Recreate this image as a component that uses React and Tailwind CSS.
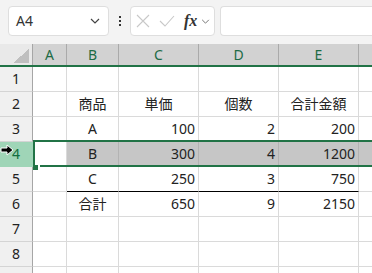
// Excel-like sheet: name box + formula bar on top, grid with row 4 selected.
const cols = [
  { key: 'A', w: 'w-[34px]' },
  { key: 'B', w: 'w-[52px]' },
  { key: 'C', w: 'w-[80px]' },
  { key: 'D', w: 'w-[80px]' },
  { key: 'E', w: 'w-[80px]' },
]

// row 9 only peeks in at the bottom edge, so its number stays out of view
const rows = [
  { n: 1, cells: ['', '', '', '', ''] },
  { n: 2, cells: ['', '商品', '単価', '個数', '合計金額'], center: true },
  { n: 3, cells: ['', 'A', '100', '2', '200'] },
  { n: 4, cells: ['', 'B', '300', '4', '1200'], selected: true },
  { n: 5, cells: ['', 'C', '250', '3', '750'], underline: true },
  { n: 6, cells: ['', '合計', '650', '9', '2150'] },
  { n: 7, cells: ['', '', '', '', ''] },
  { n: 8, cells: ['', '', '', '', ''] },
  { n: '', cells: ['', '', '', '', ''] },
]

function Chevron({ className = '' }) {
  return (
    <svg viewBox="0 0 10 6" className={className} fill="none" stroke="currentColor" strokeWidth="1.2">
      <path d="M1 1l4 4 4-4" />
    </svg>
  )
}

function Arrow() {
  return (
    <svg viewBox="0 0 14 12" className="h-[12px] w-[14px]">
      <path d="M1 4h6V1l6 5-6 5V8H1z" fill="#000" stroke="#fff" strokeWidth="1" />
    </svg>
  )
}

function Row({ row }) {
  const sel = row.selected
  return (
    <div className="relative flex h-[25px]">
      <div
        className={`flex w-[33px] shrink-0 items-center justify-center border-r border-b ${
          sel
            ? 'border-r-[#9fd5b7] border-b-[#9fd5b7] bg-[#9fd5b7] text-[#137040]'
            : 'border-r-[#a6a6a6] border-b-[#d4d4d4] bg-[#f0f0f0] text-[#222]'
        }`}
      >
        {row.n}
      </div>
      {cols.map((c, i) => {
        const v = row.cells[i]
        const isText = row.center || /[^\d]/.test(v)
        const line = sel && i > 0 ? 'border-[#b3b3b3] bg-[#c6c6c6]' : 'border-[#dadada]'
        return (
          <div
            key={c.key}
            className={`${c.w} flex shrink-0 items-center border-r border-b px-[3px] ${
              isText ? 'justify-center' : 'justify-end'
            } ${line} ${row.underline && i > 0 ? 'border-b-[#000]' : ''}`}
          >
            {v}
          </div>
        )
      })}
      <div className={`flex-1 border-b ${sel ? 'border-[#b3b3b3] bg-[#c6c6c6]' : 'border-[#dadada]'}`} />
      {sel && (
        <>
          <div className="pointer-events-none absolute left-0 top-[2px]">
            <Arrow />
          </div>
          <div className="pointer-events-none absolute -top-[2px] left-[33px] right-0 h-[27px] border-y-2 border-l-2 border-[#217346]" />
          <div className="absolute left-[33px] top-[23px] h-[5px] w-[5px] bg-[#217346]" />
          <div className="absolute left-[38px] top-[23px] h-[2px] w-[2px] bg-white" />
        </>
      )}
    </div>
  )
}

export default function App() {
  return (
    <div className="h-[273px] w-[372px] overflow-hidden bg-white text-[14px] leading-none text-[#222] font-['Noto_Sans','Noto_Sans_CJK_JP',sans-serif]">
      {/* toolbar: name box, dots, fx box, formula input */}
      <div className="flex h-[44px] items-start bg-[#f3f3f3] pt-[6px] pl-[8px]">
        <div className="flex h-[30px] w-[101px] shrink-0 items-center justify-between rounded-[4px] border border-[#dedede] bg-white pl-[7px] pr-[8px]">
          <span className="text-[#333]">A4</span>
          <Chevron className="h-[6px] w-[10px] text-[#444]" />
        </div>
        <div className="flex h-[30px] w-[21px] shrink-0 flex-col items-center justify-center gap-[2px]">
          <span className="h-[2px] w-[2px] bg-[#333]" />
          <span className="h-[2px] w-[2px] bg-[#333]" />
          <span className="h-[2px] w-[2px] bg-[#333]" />
        </div>
        <div className="flex h-[30px] w-[85px] shrink-0 items-center rounded-[4px] border border-[#dedede] bg-white pl-[5px]">
          <svg viewBox="0 0 14 14" className="h-[14px] w-[14px] text-[#c8c8c8]" stroke="currentColor" strokeWidth="1.1" fill="none">
            <path d="M1 1l12 12M13 1L1 13" />
          </svg>
          <svg viewBox="0 0 16 12" className="ml-[9px] h-[12px] w-[16px] text-[#c8c8c8]" stroke="currentColor" strokeWidth="1.1" fill="none">
            <path d="M1 6l5 5 9-10" />
          </svg>
          <span className="ml-[9px] text-[16px] font-bold italic text-[#333] font-['Liberation_Serif',serif]">fx</span>
          <Chevron className="ml-[4px] h-[5px] w-[9px] text-[#777]" />
        </div>
        <div className="ml-[5px] h-[30px] flex-1 rounded-l-[4px] border border-r-0 border-[#dedede] bg-white" />
      </div>

      {/* column headers */}
      <div className="flex h-[23px] border-b-2 border-[#217346]">
        <div className="flex w-[33px] shrink-0 items-end justify-end border-r border-[#a6a6a6] bg-[#e9e9e9] pr-[3px] pb-[2px]">
          <div className="h-[14px] w-[16px] bg-[linear-gradient(to_top_left,#bfbfbf_50%,transparent_50%)]" />
        </div>
        {cols.map((c) => (
          <div
            key={c.key}
            className={`${c.w} flex shrink-0 items-center justify-center border-r border-[#aaaaaa] bg-[#d2d2d2] text-[#1d6b45]`}
          >
            {c.key}
          </div>
        ))}
        <div className="flex-1 bg-[#d2d2d2]" />
      </div>

      {rows.map((r, i) => (
        <Row key={i} row={r} />
      ))}
    </div>
  )
}
